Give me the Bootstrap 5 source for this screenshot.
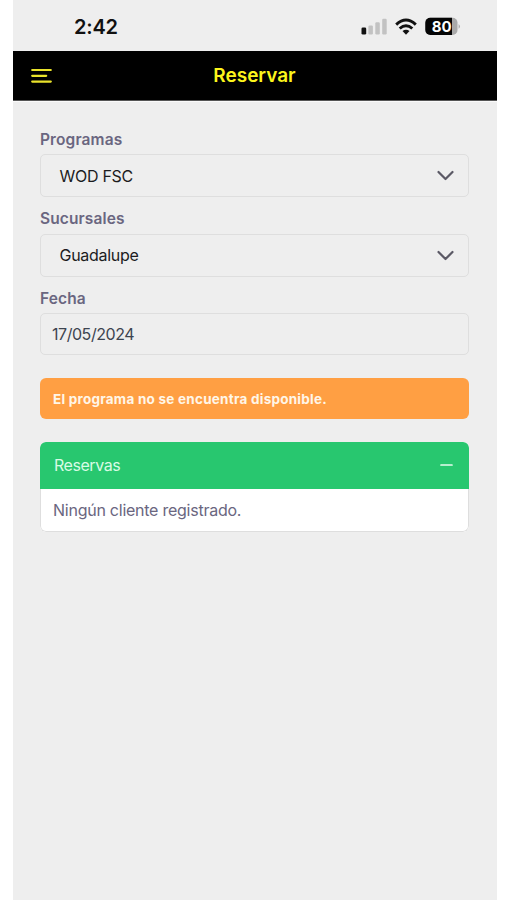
<!DOCTYPE html>
<html lang="es">
<head>
<meta charset="utf-8">
<meta name="viewport" content="width=device-width, initial-scale=1">
<title>Reservar</title>
<link href="https://cdn.jsdelivr.net/npm/bootstrap@5.3.0/dist/css/bootstrap.min.css" rel="stylesheet">
<style>
body { font-family: Inter, "Liberation Sans", sans-serif; background: #fff; font-size: 16px; line-height: 24px; color: #5e5873; overflow: hidden; }
.phone { width: 484px; height: 900px; margin-left: 12.5px; background: #eee; }
.status { height: 51px; padding: 2px 36px 0 61.5px; color: #111; }
.clock { font-size: 20px; font-weight: 600; letter-spacing: -.2px; }
.topbar { height: 50px; background: #000; color: #fcf51c; padding: 0 18px; border-bottom: 1px solid #555; }
.topbar-title { font-size: 19px; font-weight: 600; padding-top: 1px; }
.topbar-side { width: 21px; }
.rule { height: 1px; background: #fafafa; }
.content { padding: 25px 27.5px 0; }
.form-label { display: block; height: 24px; margin: 0 0 3px; padding-top: .5px; font-weight: 600; color: #6a6680; font-size: 15.5px; letter-spacing: .12px; }
.field { height: 43px; border: 1.5px solid #dedede; border-radius: 5px; padding: 0 14px 0 18.5px; color: #1c1c1e; margin-bottom: 9.5px; letter-spacing: -.28px; }
.field-date { height: 42px; padding-left: 11px; color: #3d4450; margin-bottom: 23px; letter-spacing: -.45px; }
.notice { height: 41px; background: #ff9f43; border: 0; border-radius: 6px; color: #fff6e8; font-size: 13.5px; font-weight: 700; letter-spacing: .24px; padding: 0 13px; margin-bottom: 23px; }
.panel { border: 0; border-radius: 6px; overflow: hidden; letter-spacing: -.25px; }
.panel-head { height: 47px; background: #28c76f; border: 0; color: #d8fbe5; padding: 0 16px 1px 14px; letter-spacing: -.45px; }
.panel-body { height: 43px; border: 1.5px solid #dedede; border-top: 0; border-radius: 0 0 6px 6px; background: #fff; padding: 0 12px; color: #6a6680; }
</style>
<script src="https://cdn.jsdelivr.net/npm/bootstrap@5.3.0/dist/js/bootstrap.bundle.min.js"></script>
</head>
<body>
<div class="phone">
  <div class="status d-flex align-items-center justify-content-between">
    <span class="clock">2:42</span>
    <svg width="100" height="20" viewBox="361 16.5 100 20" aria-hidden="true">
      <rect x="361.5" y="27" width="4.7" height="7" rx="1.3" fill="#111"/>
      <g fill="#c2c2c2"><rect x="368.4" y="25" width="4.5" height="9" rx="1.2"/><rect x="375.3" y="21.7" width="4.5" height="12.3" rx="1.2"/><rect x="382.2" y="18.2" width="4.5" height="15.8" rx="1.2"/></g>
      <g fill="none" stroke="#111" stroke-width="2.9"><path d="M396.2 24.1Q406 15 415.8 24.1"/><path d="M399.7 28Q406 22.3 412.3 28"/></g>
      <path d="M402.5 30.5Q406 27.8 409.5 30.5L406 34.2Z" fill="#111"/>
      <rect x="425.3" y="17.3" width="32.2" height="17.2" rx="5" fill="#a9a9a9"/>
      <path d="M430.3 17.3H452V34.5H430.3A5 5 0 0 1 425.3 29.5V22.3A5 5 0 0 1 430.3 17.3Z" fill="#050505"/>
      <path d="M458.600 23.5Q461.3 25.9 458.6 28.3Z" fill="#a9a9a9"/>
      <text x="441.8" y="31.3" text-anchor="middle" font-family="Inter, sans-serif" font-size="15" font-weight="700" fill="#fff">80</text>
    </svg>
  </div>
  <nav class="topbar d-flex align-items-center justify-content-between">
    <svg class="topbar-side" width="21" height="16" viewBox="0 0 21 16" fill="none" stroke="#e9e22b" stroke-width="2.2" stroke-linecap="round" aria-label="Menú"><path d="M1.2 2H19.8M1.2 7.8H15.2M1.2 13.6H19.8"/></svg>
    <span class="topbar-title">Reservar</span>
    <span class="topbar-side"></span>
  </nav>
  <div class="rule"></div>
  <main class="content">
    <span class="form-label">Programas</span>
    <div class="field d-flex align-items-center justify-content-between">
      <span>WOD FSC</span>
      <svg width="17" height="11" viewBox="0 0 17 11" fill="none" stroke="#5b5965" stroke-width="2.2" stroke-linecap="round" stroke-linejoin="round" aria-hidden="true"><path d="M1.5 2L8.5 9L15.5 2"/></svg>
    </div>
    <span class="form-label">Sucursales</span>
    <div class="field d-flex align-items-center justify-content-between">
      <span>Guadalupe</span>
      <svg width="17" height="11" viewBox="0 0 17 11" fill="none" stroke="#5b5965" stroke-width="2.2" stroke-linecap="round" stroke-linejoin="round" aria-hidden="true"><path d="M1.5 2L8.5 9L15.5 2"/></svg>
    </div>
    <span class="form-label">Fecha</span>
    <div class="field field-date d-flex align-items-center"><span>17/05/2024</span></div>
    <div class="alert notice d-flex align-items-center" role="alert"><span>El programa no se encuentra disponible.</span></div>
    <section class="card panel">
      <div class="card-header panel-head d-flex align-items-center justify-content-between">
        <span>Reservas</span>
        <svg width="13" height="4" viewBox="0 0 13 4" stroke="#e6fcee" stroke-width="1.7" stroke-linecap="round" aria-hidden="true"><path d="M1 2H12"/></svg>
      </div>
      <div class="panel-body d-flex align-items-center"><span>Ningún cliente registrado.</span></div>
    </section>
  </main>
</div>
</body>
</html>
